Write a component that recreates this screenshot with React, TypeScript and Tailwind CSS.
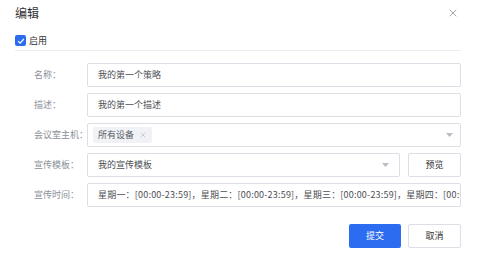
import { X } from "lucide-react";

const rowLabel = "w-[53px] shrink-0 text-[9px] text-[#8b8f97] whitespace-nowrap";
const box = "h-[24px] border border-[#dcdfe6] rounded-[2px] bg-white flex items-center px-[10px] text-[9px] text-[#4d4f55]";

function Arrow() {
  return (
    <svg width="7" height="4" viewBox="0 0 7 4" className="shrink-0">
      <path d="M0 0h7L3.5 4z" fill="#b8bcc4" />
    </svg>
  );
}

export default function App() {
  return (
    <div
      className="w-[477px] h-[259px] bg-white overflow-hidden pl-[15px] pr-[16px] pt-[6px]"
      style={{ fontFamily: '"Noto Sans CJK SC", "Noto Sans", sans-serif' }}
    >
      {/* Header */}
      <div className="flex items-center justify-between h-[14px]">
        <span className="text-[12px] leading-none text-[#303133]">编辑</span>
        <X className="w-[12px] h-[12px] text-[#8c8f96] mr-[2px]" strokeWidth={1.6} />
      </div>

      {/* Enable */}
      <div className="mt-[15px] pb-[4px] border-b border-[#e9ecf2] flex items-center gap-[3px] h-[16px]">
        <span className="w-[11px] h-[11px] rounded-[2px] bg-[#2c6cf0] flex items-center justify-center">
          <svg width="8" height="8" viewBox="0 0 8 8">
            <path d="M1.2 4.2l1.9 1.9L6.9 2" stroke="white" strokeWidth="1.2" fill="none" />
          </svg>
        </span>
        <span className="text-[9px] text-[#303133]">启用</span>
      </div>

      {/* Form */}
      <div className="mt-[12px] pl-[19px] flex flex-col gap-[6px]">
        <div className="flex items-center">
          <span className={rowLabel}>名称：</span>
          <div className={`${box} flex-1`}>我的第一个策略</div>
        </div>
        <div className="flex items-center">
          <span className={rowLabel}>描述：</span>
          <div className={`${box} flex-1`}>我的第一个描述</div>
        </div>
        <div className="flex items-center">
          <span className={rowLabel}>会议室主机：</span>
          <div className={`${box} flex-1 !px-[5px] justify-between`}>
            <span className="h-[16px] px-[5px] rounded-[2px] bg-[#f0f2f5] text-[#5a5e66] flex items-center gap-[5px]">
              所有设备
              <X className="w-[8px] h-[8px] text-[#a8abb2]" strokeWidth={1.5} />
            </span>
            <span className="mr-[2px]">
              <Arrow />
            </span>
          </div>
        </div>
        <div className="flex items-center">
          <span className={rowLabel}>宣传模板：</span>
          <div className="flex-1 flex gap-[8px]">
            <div className={`${box} flex-1 justify-between`}>
              <span>我的宣传模板</span>
              <Arrow />
            </div>
            <button className="w-[53px] h-[24px] border border-[#dcdfe6] rounded-[2px] bg-white text-[9px] text-[#303133]">
              预览
            </button>
          </div>
        </div>
        <div className="flex items-center">
          <span className={rowLabel}>宣传时间：</span>
          <div className={`${box} flex-1 overflow-hidden whitespace-nowrap tracking-[0.2px]`}>
            星期一：[00:00-23:59]，星期二：[00:00-23:59]，星期三：[00:00-23:59]，星期四：[00:0
          </div>
        </div>
      </div>

      {/* Footer */}
      <div className="mt-[17px] flex justify-end gap-[7px]">
        <button className="w-[52px] h-[24px] rounded-[2px] bg-[#2c6cf0] text-white text-[9px]">提交</button>
        <button className="w-[53px] h-[24px] rounded-[2px] border border-[#dcdfe6] bg-white text-[#303133] text-[9px]">
          取消
        </button>
      </div>
    </div>
  );
}
